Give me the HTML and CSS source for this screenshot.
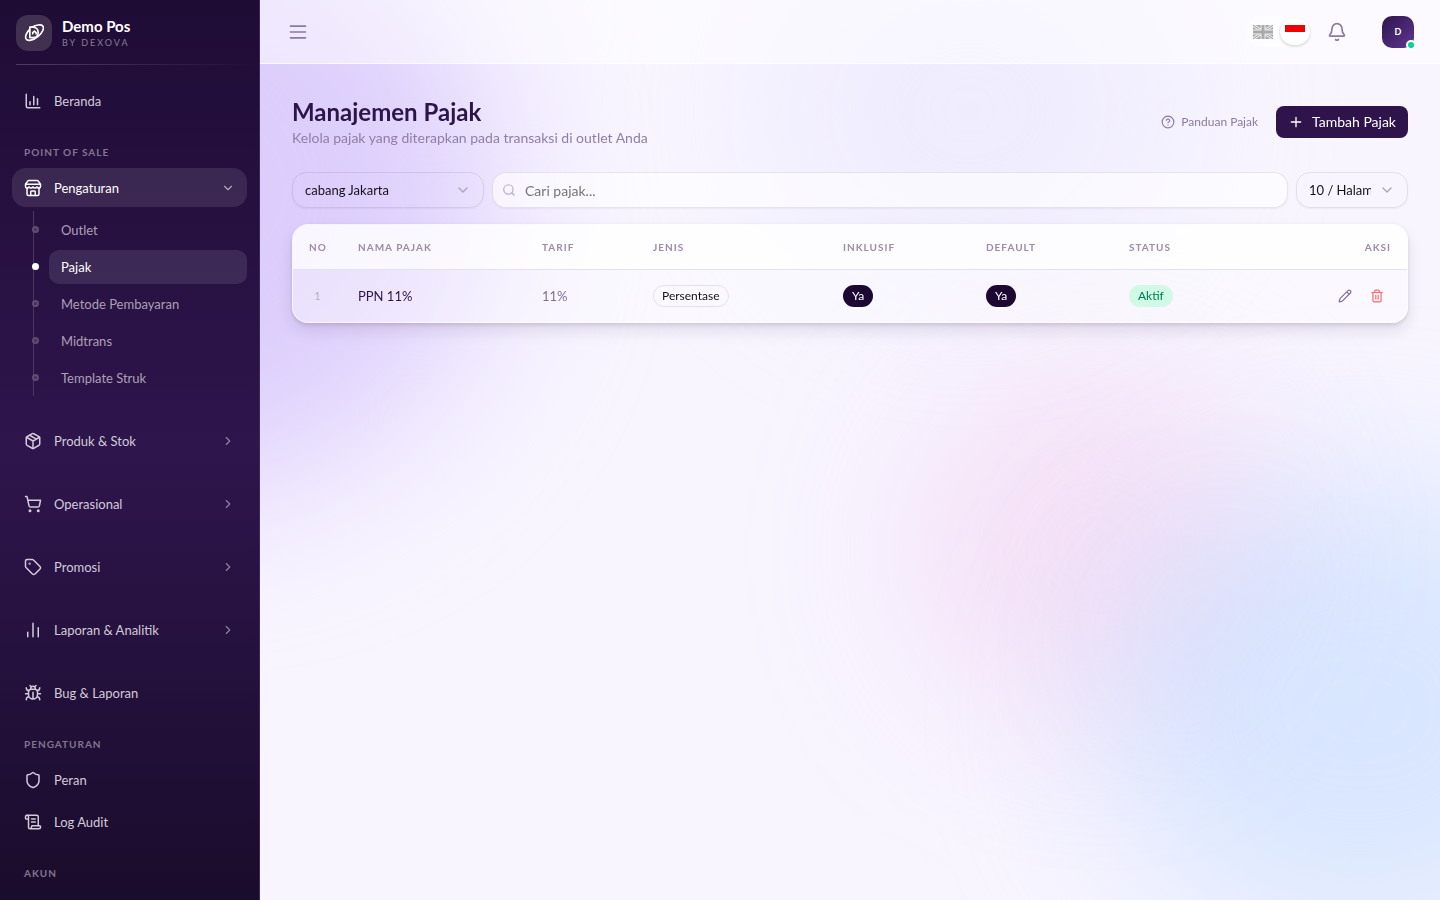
FILE: index.html
```html
<!DOCTYPE html>
<html lang="id">
<head>
  <meta charset="UTF-8" />
  <meta name="viewport" content="width=device-width, initial-scale=1.0"/>
  <title>Manajemen Pajak - Demo Pos</title>
  <link rel="stylesheet" href="styles.css">
</head>
<body>

  <div class="glow" aria-hidden="true">
    <div class="blob violet"></div>
    <div class="blob indigo"></div>
    <div class="blob pink"></div>
    <div class="blob blue"></div>
  </div>

  <aside class="sidebar">
    <div class="brand">
      <span class="brand-logo">
        <svg width="20" height="20" viewBox="0 0 24 24"><path d="M6.500 8C3 12 1.200 16.500 2.500 19c2 3.500 9 1.500 14.500-3s7.500-10 5.500-12.500S14 2.500 9.500 5"/><path d="M7 5v12.500h4.500a6.300 6.300 0 0 0 0-12.500z"/><path d="M10.500 13v-1.500l2-1.800 2 1.800V13"/></svg>
      </span>
      <div>
        <div class="brand-name">Demo Pos</div>
        <div class="brand-by">BY DEXOVA</div>
      </div>
    </div>

    <nav class="nav">
      <a class="nav-item" href="#">
        <svg class="icon" viewBox="0 0 24 24"><path d="M3 3v16a2 2 0 0 0 2 2h16"/><path d="M13 17V6M18 17V9M8 17v-4"/></svg>
        <span>Beranda</span>
      </a>

      <div class="nav-label">POINT OF SALE</div>
      <button class="nav-item open" type="button" aria-expanded="true">
        <svg class="icon" viewBox="0 0 24 24"><path d="M4 12v8a2 2 0 0 0 2 2h12a2 2 0 0 0 2-2v-8"/><path d="M6.500 2h11a2 2 0 0 1 1.600.8L22 7v3a2 2 0 0 1-2 2 3 3 0 0 1-2.700-1.500 3 3 0 0 1-5.300 0 3 3 0 0 1-5.300 0A3 3 0 0 1 4 12a2 2 0 0 1-2-2V7l2.900-4.200A2 2 0 0 1 6.500 2zM2 7h20"/><path d="M9 22v-5a1 1 0 0 1 1-1h4a1 1 0 0 1 1 1v5"/></svg>
        <span>Pengaturan</span>
        <svg class="chevron" viewBox="0 0 24 24"><path d="m6 9 6 6 6-6"/></svg>
      </button>
      <ul class="subnav">
        <li><a href="#">Outlet</a></li>
        <li class="current"><a href="#" aria-current="page">Pajak</a></li>
        <li><a href="#">Metode Pembayaran</a></li>
        <li><a href="#">Midtrans</a></li>
        <li><a href="#">Template Struk</a></li>
      </ul>

      <div class="nav-groups">
        <button class="nav-item" type="button">
          <svg class="icon" viewBox="0 0 24 24"><path d="M11 21.700a2 2 0 0 0 2 0l7-4a2 2 0 0 0 1-1.700V8a2 2 0 0 0-1-1.700l-7-4a2 2 0 0 0-2 0l-7 4A2 2 0 0 0 3 8v8a2 2 0 0 0 1 1.700z"/><path d="M12 22V12M3.300 7l8.700 5 8.700-5M7.500 4.300l9 5.100"/></svg>
          <span>Produk &amp; Stok</span>
          <svg class="chevron" viewBox="0 0 24 24"><path d="m9 18 6-6-6-6"/></svg>
        </button>
        <button class="nav-item" type="button">
          <svg class="icon" viewBox="0 0 24 24"><circle cx="8" cy="21" r="1"/><circle cx="19" cy="21" r="1"/><path d="M2 2h2l2.700 12.400a2 2 0 0 0 2 1.600h9.800a2 2 0 0 0 2-1.600L22 7H5.100"/></svg>
          <span>Operasional</span>
          <svg class="chevron" viewBox="0 0 24 24"><path d="m9 18 6-6-6-6"/></svg>
        </button>
        <button class="nav-item" type="button">
          <svg class="icon" viewBox="0 0 24 24"><path d="M12.600 2.600A2 2 0 0 0 11.200 2H4a2 2 0 0 0-2 2v7.200a2 2 0 0 0 .6 1.400l8.700 8.700a2.400 2.400 0 0 0 3.400 0l6.600-6.600a2.400 2.400 0 0 0 0-3.400z"/><circle cx="7.500" cy="7.500" r=".5"/></svg>
          <span>Promosi</span>
          <svg class="chevron" viewBox="0 0 24 24"><path d="m9 18 6-6-6-6"/></svg>
        </button>
        <button class="nav-item" type="button">
          <svg class="icon" viewBox="0 0 24 24"><path d="M5 21v-6M12 21V3M19 21V9"/></svg>
          <span>Laporan &amp; Analitik</span>
          <svg class="chevron" viewBox="0 0 24 24"><path d="m9 18 6-6-6-6"/></svg>
        </button>
        <a class="nav-item" href="#">
          <svg class="icon" viewBox="0 0 24 24"><path d="M12 20v-9M14 7a4 4 0 0 1 4 4v3a6 6 0 0 1-12 0v-3a4 4 0 0 1 4-4zM14.100 3.900 16 2M8 2l1.900 1.900M9 7.100V6a3 3 0 1 1 6 0v1.100M21 21a4 4 0 0 0-3.800-4M21 5a4 4 0 0 1-3.600 4M22 13h-4M3 21a4 4 0 0 1 3.800-4M3 5a4 4 0 0 0 3.600 4M6 13H2"/></svg>
          <span>Bug &amp; Laporan</span>
        </a>
      </div>

      <div class="nav-label">PENGATURAN</div>
      <div class="nav-list">
        <a class="nav-item" href="#">
          <svg class="icon" viewBox="0 0 24 24"><path d="M20 13c0 5-3.500 7.500-7.700 9a1 1 0 0 1-.6 0C7.500 20.500 4 18 4 13V6a1 1 0 0 1 1-1c2 0 4.500-1.200 6.200-2.700a1.200 1.200 0 0 1 1.600 0C14.500 3.800 17 5 19 5a1 1 0 0 1 1 1z"/></svg>
          <span>Peran</span>
        </a>
        <a class="nav-item" href="#">
          <svg class="icon" viewBox="0 0 24 24"><path d="M15 12h-5M15 8h-5M19 17V5a2 2 0 0 0-2-2H4"/><path d="M8 21h12a2 2 0 0 0 2-2v-1a1 1 0 0 0-1-1H11a1 1 0 0 0-1 1v1a2 2 0 1 1-4 0V5a2 2 0 1 0-4 0v2a1 1 0 0 0 1 1h3"/></svg>
          <span>Log Audit</span>
        </a>
      </div>

      <div class="nav-label">AKUN</div>
    </nav>
  </aside>

  <div class="page">
    <header class="topbar">
      <button class="icon-button" type="button" aria-label="Menu">
        <svg class="icon" viewBox="0 0 24 24"><path d="M3 5h18M3 12h18M3 19h18"/></svg>
      </button>
      <div class="topbar-right">
        <div class="languages">
          <button class="lang" type="button" aria-label="English">
            <svg width="20" height="14" viewBox="0 0 20 14"><path fill="#aaa" d="M0 0h20v14H0z"/><path stroke="#eee" stroke-width="3" d="m0 0 20 14M20 0 0 14"/><path stroke="#999" d="m0 0 20 14M20 0 0 14"/><path stroke="#eee" stroke-width="5" d="M10 0v14M0 7h20"/><path stroke="#aaa" stroke-width="3" d="M10 0v14M0 7h20"/></svg>
          </button>
          <button class="lang selected" type="button" aria-label="Bahasa Indonesia">
            <svg width="20" height="14" viewBox="0 0 20 14"><path fill="#fff" d="M0 0h20v14H0z"/><path fill="#f00000" d="M0 0h20v7H0z"/></svg>
          </button>
        </div>
        <button class="icon-button" type="button" aria-label="Notifikasi">
          <svg class="icon" viewBox="0 0 24 24"><path d="M10.300 21a2 2 0 0 0 3.400 0"/><path d="M3.300 15.300A1 1 0 0 0 4 17h16a1 1 0 0 0 .7-1.700C19.400 14 18 12.500 18 8A6 6 0 0 0 6 8c0 4.500-1.400 6-2.700 7.300"/></svg>
        </button>
        <button class="avatar" type="button">D</button>
      </div>
    </header>

    <main class="content">
      <div class="page-head">
        <div>
          <h1>Manajemen Pajak</h1>
          <p>Kelola pajak yang diterapkan pada transaksi di outlet Anda</p>
        </div>
        <div class="actions">
          <a class="guide" href="#">
            <svg class="icon" viewBox="0 0 24 24"><circle cx="12" cy="12" r="10"/><path d="M9.100 9a3 3 0 0 1 5.800 1c0 2-3 3-3 3M12 17h.01"/></svg>
            Panduan Pajak
          </a>
          <button class="add" type="button">
            <svg class="icon" viewBox="0 0 24 24"><path d="M5 12h14M12 5v14"/></svg>
            Tambah Pajak
          </button>
        </div>
      </div>

      <div class="filters">
        <div class="select branch">
          <select aria-label="Outlet"><option>cabang Jakarta</option></select>
          <svg class="icon" viewBox="0 0 24 24"><path d="m6 9 6 6 6-6"/></svg>
        </div>
        <div class="search">
          <svg class="icon" viewBox="0 0 24 24"><circle cx="11" cy="11" r="8"/><path d="m21 21-4.300-4.300"/></svg>
          <input type="text" placeholder="Cari pajak..." aria-label="Cari pajak">
        </div>
        <div class="select per-page">
          <select aria-label="Baris per halaman"><option>10 / Halaman</option></select>
          <svg class="icon" viewBox="0 0 24 24"><path d="m6 9 6 6 6-6"/></svg>
        </div>
      </div>

      <div class="card">
        <table>
          <colgroup>
            <col class="c-no"><col class="c-name"><col class="c-rate"><col class="c-type"><col class="c-flag"><col class="c-flag"><col class="c-status"><col>
          </colgroup>
          <thead>
            <tr>
              <th>NO</th>
              <th>NAMA PAJAK</th>
              <th>TARIF</th>
              <th>JENIS</th>
              <th>INKLUSIF</th>
              <th>DEFAULT</th>
              <th>STATUS</th>
              <th class="right">AKSI</th>
            </tr>
          </thead>
          <tbody>
            <tr>
              <td class="number">1</td>
              <td class="name">PPN 11%</td>
              <td class="rate">11%</td>
              <td><span class="badge outline">Persentase</span></td>
              <td><span class="badge dark">Ya</span></td>
              <td><span class="badge dark">Ya</span></td>
              <td><span class="badge green">Aktif</span></td>
              <td>
                <div class="row-actions">
                  <button type="button" aria-label="Ubah">
                    <svg class="icon" viewBox="0 0 24 24"><path d="M21.200 6.800a1 1 0 0 0-4-4L3.800 16.200a2 2 0 0 0-.5.8L2 21.400a.5.5 0 0 0 .6.6L7 20.700a2 2 0 0 0 .8-.5zM15 5l4 4"/></svg>
                  </button>
                  <button class="delete" type="button" aria-label="Hapus">
                    <svg class="icon" viewBox="0 0 24 24"><path d="M3 6h18M19 6v14a2 2 0 0 1-2 2H7a2 2 0 0 1-2-2V6M8 6V4a2 2 0 0 1 2-2h4a2 2 0 0 1 2 2v2M10 11v6M14 11v6"/></svg>
                  </button>
                </div>
              </td>
            </tr>
          </tbody>
        </table>
      </div>
    </main>
  </div>

</body>
</html>
```
FILE: styles.css
```css
*, *::before, *::after {
  box-sizing: border-box;
}

body {
  margin: 0;
  min-height: 100vh;
  display: flex;
  font-family: Lato, "Open Sans", sans-serif;
  font-size: 14px;
  line-height: 20px;
  color: #2d1449;
  background: #f8f5ff;
}

button, input, select {
  font: inherit;
  color: inherit;
}

button {
  border: none;
  background: none;
  padding: 0;
  cursor: pointer;
}

a {
  color: inherit;
  text-decoration: none;
}

svg {
  fill: none;
  flex: none;
}

.icon, .chevron, .brand-logo svg {
  stroke: currentColor;
  stroke-width: 2;
  stroke-linecap: round;
  stroke-linejoin: round;
}

/* soft colour clouds behind the page */
.glow {
  position: fixed;
  inset: 0;
  overflow: hidden;
  z-index: -1;
}

.blob {
  position: absolute;
  border-radius: 50%;
  filter: blur(80px);
}

.blob.violet {
  left: -110px;
  top: -110px;
  width: 600px;
  height: 600px;
  background: #dccdfc;
}

.blob.indigo {
  left: 770px;
  top: -60px;
  width: 400px;
  height: 340px;
  background: rgba(224,222,252,0.4);
}

.blob.pink {
  left: 910px;
  top: 370px;
  width: 380px;
  height: 360px;
  background: rgba(240,176,224,0.3);
}

.blob.blue {
  left: 1100px;
  top: 480px;
  width: 520px;
  height: 460px;
  background: rgba(190,218,255,0.54);
}

/* sidebar */
.sidebar {
  width: 260px;
  flex: none;
  height: 100vh;
  overflow: hidden;
  color: #fff;
  background: linear-gradient(#1f0c35, #2e154c 50%, #1a0c2c);
  border-right: 1px solid #3d2754;
}

.brand {
  display: flex;
  align-items: center;
  gap: 10px;
  height: 65px;
  margin-left: 16px;
  background: linear-gradient(90deg, rgba(255,255,255,0.2), rgba(255,255,255,0)) bottom / 100% 1px no-repeat;
}

.brand-logo {
  width: 36px;
  height: 36px;
  border-radius: 12px;
  background: #41304f;
  display: flex;
  align-items: center;
  justify-content: center;
}

.brand-name {
  font-size: 15px;
  line-height: 20px;
  font-weight: bold;
}

.brand-by {
  font-size: 9px;
  line-height: 14px;
  letter-spacing: 2px;
  color: #8a7d97;
}

.nav {
  padding: 16px 12px 0;
}

.nav-item {
  display: flex;
  align-items: center;
  gap: 12px;
  width: 100%;
  height: 39px;
  padding: 0 12px;
  border-radius: 14px;
  font-size: 13px;
  text-align: left;
  color: #d2cad9;
}

.nav-item .icon {
  width: 18px;
  height: 18px;
}

.nav-item .chevron {
  width: 14px;
  height: 14px;
  margin-left: auto;
  opacity: 0.6;
}

.nav-item.open {
  background: rgba(255,255,255,0.1);
  color: #fff;
}

.nav-label {
  padding: 24px 12px 8px;
  font-size: 10px;
  line-height: 16px;
  font-weight: bold;
  letter-spacing: 1px;
  color: #83758f;
}

.subnav {
  list-style: none;
  margin: 4px 0 25px 21px;
  padding: 0;
  border-left: 1px solid #4b3860;
}

.subnav li {
  display: flex;
  align-items: center;
  gap: 10px;
  height: 37px;
  font-size: 13px;
  color: #aba0b5;
}

.subnav li::before {
  content: "";
  width: 7px;
  height: 7px;
  margin-left: -2px;
  border-radius: 50%;
  background: #45315b;
  border: 2px solid #5f4d72;
}

.subnav a {
  flex: 1;
  padding: 7px 12px;
  border-radius: 10px;
}

.subnav .current {
  color: #fff;
}

.subnav .current::before {
  background: #fff;
  border-color: #fff;
}

.subnav .current a {
  background: rgba(255,255,255,0.1);
}

.nav-groups {
  display: flex;
  flex-direction: column;
  gap: 24px;
}

.nav-list {
  display: flex;
  flex-direction: column;
  gap: 3px;
}

/* top bar */
.page {
  flex: 1;
  min-width: 0;
}

.topbar {
  display: flex;
  align-items: center;
  justify-content: space-between;
  height: 64px;
  padding: 0 26px 0 22px;
  background: rgba(255,255,255,0.5);
  border-bottom: 1px solid rgba(255,255,255,0.7);
}

.topbar-right {
  display: flex;
  align-items: center;
}

.icon-button {
  width: 32px;
  height: 32px;
  display: flex;
  align-items: center;
  justify-content: center;
  color: #8b7a9f;
}

.icon-button .icon {
  width: 20px;
  height: 20px;
}

.languages {
  display: flex;
  gap: 2px;
  padding: 2px;
  margin-right: 9px;
  border-radius: 16px;
  background: rgba(255,255,255,0.4);
}

.lang {
  width: 30px;
  height: 27px;
  display: flex;
  align-items: center;
  justify-content: center;
  border-radius: 14px;
}

.lang.selected {
  background: #fff;
  box-shadow: 0 1px 3px rgba(0,0,0,0.2);
}

.avatar {
  position: relative;
  width: 32px;
  height: 32px;
  margin-left: 29px;
  border-radius: 10px;
  font-size: 9px;
  font-weight: bold;
  color: #fff;
  background: linear-gradient(135deg, #2e154c, #5f3791);
}

.avatar::after {
  content: "";
  position: absolute;
  right: -2px;
  bottom: -2px;
  width: 10px;
  height: 10px;
  border: 2px solid #fff;
  border-radius: 50%;
  background: #00d492;
}

/* content */
.content {
  padding: 32px;
}

.page-head {
  display: flex;
  align-items: center;
  justify-content: space-between;
  margin-bottom: 24px;
}

h1 {
  margin: 0;
  font-size: 24px;
  line-height: 32px;
}

.page-head p {
  margin: 0;
  color: #8f7fa6;
}

.actions {
  display: flex;
  align-items: center;
  gap: 18px;
}

.guide {
  display: flex;
  align-items: center;
  gap: 6px;
  font-size: 12px;
  color: #8b7a9f;
}

.guide .icon {
  width: 14px;
  height: 14px;
}

.add {
  display: flex;
  align-items: center;
  gap: 8px;
  height: 32px;
  padding: 0 12px;
  border-radius: 8px;
  color: #fff;
  background: #2e144b;
}

.add .icon {
  width: 16px;
  height: 16px;
}

.filters {
  display: flex;
  gap: 8px;
  margin-bottom: 16px;
}

.select, .search {
  position: relative;
  height: 36px;
  border: 1px solid rgba(45,20,73,0.1);
  border-radius: 14px;
  box-shadow: 0 1px 2px rgba(0,0,0,0.05);
}

.select select, .search input {
  width: 100%;
  height: 100%;
  border: none;
  border-radius: 14px;
  background: none;
  appearance: none;
  outline: none;
}

.select select {
  padding: 0 36px 0 12px;
  font-size: 13px;
  color: #151019;
}

.select .icon {
  position: absolute;
  right: 12px;
  top: 9px;
  width: 16px;
  height: 16px;
  color: #aca4b5;
  pointer-events: none;
}

.branch {
  width: 192px;
}

.per-page {
  width: 112px;
}

.search {
  flex: 1;
  background: rgba(255,255,255,0.6);
}

.search input {
  padding: 0 12px 0 32px;
}

.search input::placeholder {
  color: #757575;
}

.search .icon {
  position: absolute;
  left: 9px;
  top: 10px;
  width: 14px;
  height: 14px;
  color: #b9acc9;
}

.card {
  overflow: hidden;
  border: 1px solid rgba(255,255,255,0.6);
  border-radius: 16px;
  background: rgba(255,255,255,0.4);
  box-shadow: 0 8px 16px rgba(31,12,53,0.1), 0 2px 4px rgba(31,12,53,0.12);
}

table {
  width: 100%;
  table-layout: fixed;
  border-collapse: collapse;
}

th {
  height: 44px;
  padding: 0 16px;
  text-align: left;
  font-size: 10px;
  letter-spacing: 1px;
  color: #9b8bac;
  background: rgba(255,255,255,0.7);
  border-bottom: 1px solid #e6e0ee;
}

td {
  height: 53px;
  padding: 0 16px;
}

.c-no { width: 49px; }
.c-name { width: 184px; }
.c-rate { width: 111px; }
.c-type { width: 190px; }
.c-flag { width: 143px; }
.c-status { width: 142px; }

.right {
  text-align: right;
}

.number {
  text-align: center;
  font-size: 11px;
  color: #b5a9c4;
}

.name {
  font-size: 13px;
}

.rate {
  font-size: 13px;
  color: #806f96;
}

.badge {
  display: inline-block;
  height: 22px;
  padding: 0 8px;
  border: 1px solid transparent;
  border-radius: 11px;
  font-size: 12px;
  line-height: 20px;
}

.badge.outline {
  border-color: #e4e1e9;
  color: #151019;
}

.badge.dark {
  background: #1c0833;
  color: #fff;
}

.badge.green {
  background: #d0fae5;
  color: #007a55;
}

.row-actions {
  display: flex;
  justify-content: flex-end;
  gap: 4px;
}

.row-actions button {
  width: 28px;
  height: 28px;
  display: flex;
  align-items: center;
  justify-content: center;
  color: #806f96;
}

.row-actions .delete {
  color: #ff6467;
}

.row-actions .icon {
  width: 14px;
  height: 14px;
}
```
